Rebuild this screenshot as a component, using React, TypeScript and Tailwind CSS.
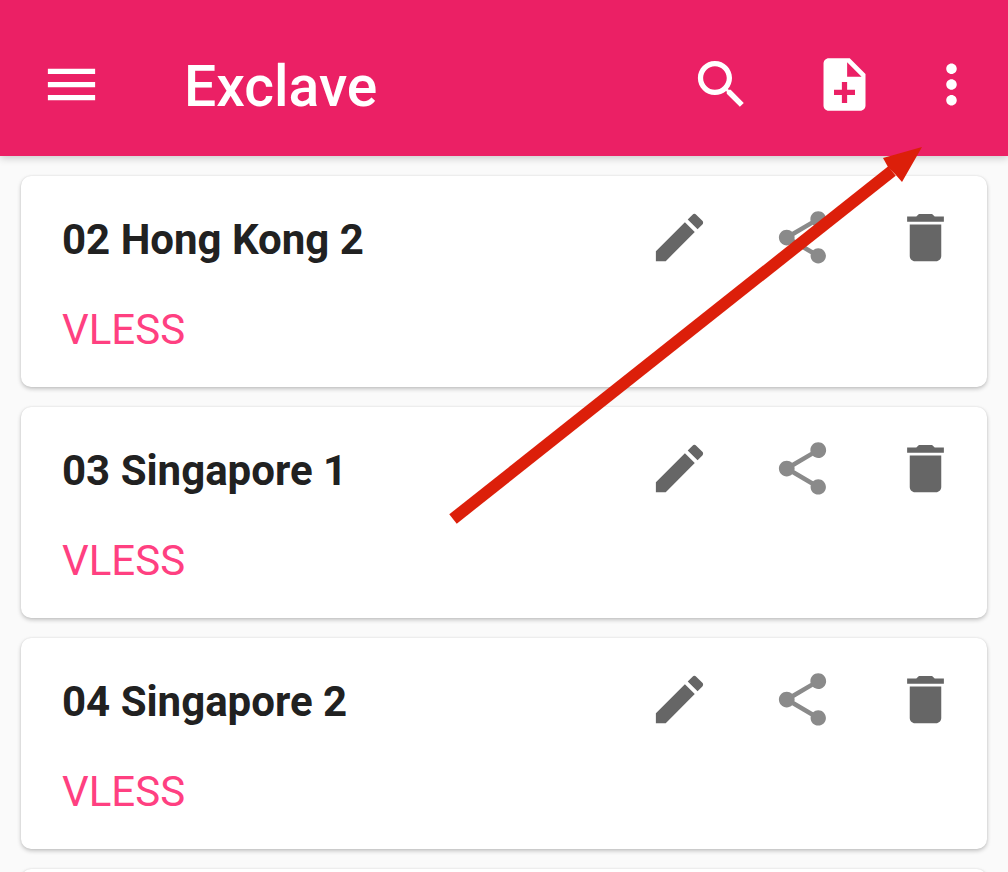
import React from "react";

const Icon = ({ d, className }: { d: string; className: string }) => {
  return (
    <svg viewBox="0 0 24 24" className={className} fill="currentColor">
      <path d={d} />
    </svg>
  );
};

const menu = "M3 18h18v-2H3v2zm0-5h18v-2H3v2zm0-7v2h18V6H3z";
const search =
  "M15.5 14h-.79l-.28-.27C15.41 12.59 16 11.11 16 9.5 16 5.91 13.09 3 9.5 3S3 5.91 3 9.5 5.91 16 9.5 16c1.61 0 3.09-.59 4.23-1.57l.27.28v.79l5 4.99L20.49 19l-4.99-5zm-6 0C7.01 14 5 11.99 5 9.5S7.01 5 9.5 5 14 7.01 14 9.5 11.99 14 9.5 14z";
const noteAdd =
  "M14 2H6c-1.1 0-1.99.9-1.99 2L4 20c0 1.1.89 2 1.99 2H18c1.1 0 2-.9 2-2V8l-6-6zm2 14h-3v3h-2v-3H8v-2h3v-3h2v3h3v2zm-3-7V3.5L18.5 9H13z";
const moreVert =
  "M12 8c1.1 0 2-.9 2-2s-.9-2-2-2-2 .9-2 2 .9 2 2 2zm0 2c-1.1 0-2 .9-2 2s.9 2 2 2 2-.9 2-2-.9-2-2-2zm0 6c-1.1 0-2 .9-2 2s.9 2 2 2 2-.9 2-2-.9-2-2-2z";
const edit =
  "M3 17.25V21h3.75L17.81 9.94l-3.75-3.75L3 17.25zM20.71 7.04c.39-.39.39-1.02 0-1.41l-2.34-2.34c-.39-.39-1.02-.39-1.41 0l-1.83 1.83 3.75 3.75 1.83-1.83z";
const share =
  "M18 16.08c-.76 0-1.44.3-1.96.77L8.91 12.7c.05-.23.09-.46.09-.7s-.04-.47-.09-.7l7.05-4.11c.54.5 1.25.81 2.04.81 1.66 0 3-1.34 3-3s-1.34-3-3-3-3 1.34-3 3c0 .24.04.47.09.7L8.04 9.81C7.5 9.31 6.79 9 6 9c-1.66 0-3 1.34-3 3s1.34 3 3 3c.79 0 1.5-.31 2.04-.81l7.12 4.16c-.05.21-.08.43-.08.65 0 1.61 1.31 2.92 2.92 2.92 1.61 0 2.92-1.31 2.92-2.92s-1.31-2.92-2.92-2.92z";
const trash =
  "M6 19c0 1.1.9 2 2 2h8c1.1 0 2-.9 2-2V7H6v12zM19 4h-3.5l-1-1h-5l-1 1H5v2h14V4z";

const cardClass =
  "mx-[21px] rounded-[10px] bg-white shadow-[0_2px_4px_rgba(0,0,0,0.22),0_0_2px_rgba(0,0,0,0.1)]";

const Card = ({ title }: { title: string }) => {
  return (
    <div className={`${cardClass} h-[211px] shrink-0`}>
      <div className="flex h-[122px] items-center">
        <div className="flex-1 pl-[41px] pt-[4px] text-[42px] font-bold text-[#212121]">{title}</div>
        <div className="flex w-[123px] justify-center text-[#666666]">
          <Icon d={edit} className="h-[63px] w-[63px]" />
        </div>
        <div className="flex w-[123px] justify-center text-[#8a8a8a]">
          <Icon d={share} className="h-[63px] w-[63px]" />
        </div>
        <div className="flex w-[123px] justify-center text-[#666666]">
          <Icon d={trash} className="h-[63px] w-[63px]" />
        </div>
      </div>
      <div className="pl-[41px] pt-[2px] text-[42px] leading-[60px] text-[#ff4081]">VLESS</div>
    </div>
  );
};

export default function App() {
  return (
    <main className="relative h-[872px] w-[1008px] overflow-hidden bg-[#fafafa] font-['Roboto',sans-serif]">
      <header className="relative z-10 flex h-[156px] items-center bg-[#eb2065] pt-[12px] text-white shadow-[0_2px_8px_rgba(0,0,0,0.2)]">
        <div className="flex w-[143px] justify-center">
          <Icon d={menu} className="h-[63px] w-[63px]" />
        </div>
        <div className="ml-[41px] flex-1 pt-[6px] text-[57px] font-medium">Exclave</div>
        <div className="flex w-[148px] justify-center">
          <Icon d={search} className="h-[63px] w-[63px]" />
        </div>
        <div className="flex w-[99px] justify-center">
          <Icon d={noteAdd} className="h-[63px] w-[63px]" />
        </div>
        <div className="flex w-[114px] justify-center">
          <Icon d={moreVert} className="h-[63px] w-[63px]" />
        </div>
      </header>
      <section className="flex flex-col gap-[20px] pt-[20px]">
        <Card title="02 Hong Kong 2" />
        <Card title="03 Singapore 1" />
        <Card title="04 Singapore 2" />
        <div className={`${cardClass} h-[211px] shrink-0`}></div>
      </section>
      {/* annotation arrow on top of the screenshot */}
      <svg viewBox="0 0 1008 872" className="absolute left-0 top-0 z-20 h-[872px] w-[1008px]">
        <path d="M453 519 L892 171" stroke="#dc1f0a" strokeWidth="12" fill="none" />
        <polygon points="922,147 883,158 888,167 895,174 902,182" fill="#dc1f0a" />
      </svg>
    </main>
  );
}
